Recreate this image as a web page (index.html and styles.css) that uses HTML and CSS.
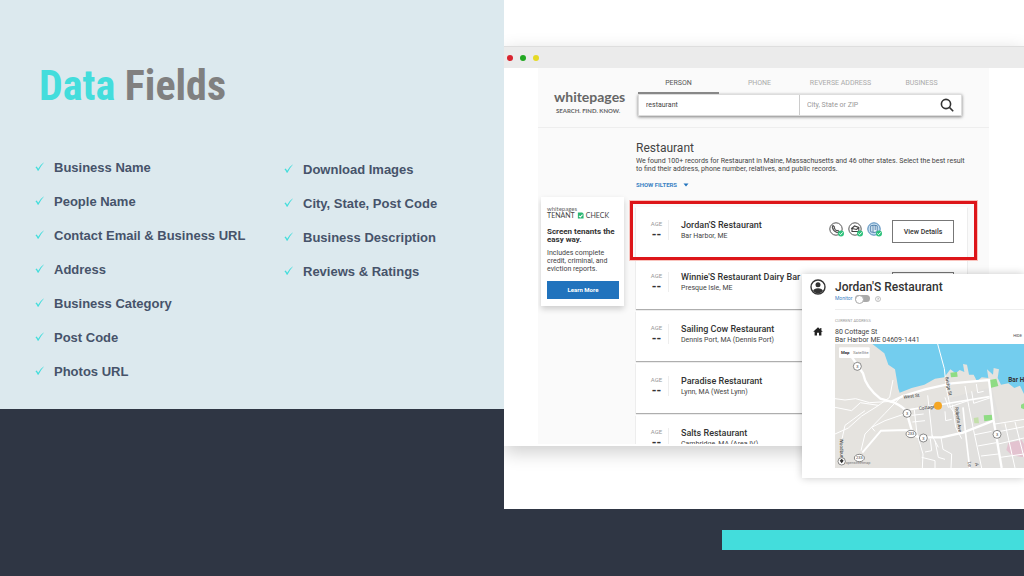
FILE: index.html
```html
<!DOCTYPE html>
<html lang="en">
<head>
    <meta charset="UTF-8">
    <meta name="viewport" content="width=device-width, initial-scale=1.0">
    <title>Data Fields</title>
    <link rel="stylesheet" href="styles.css">
</head>
<body>
    <main class="slide">
        <section class="fields">
            <h1><span>Data</span> Fields</h1>
            <div class="lists">
                <ul>
                    <li><svg class="tick" viewBox="0 0 10 10"><path d="M0.5 5.8 2 4.9 3.5 7.5Q6 3 9.6 0.6L9.8 0.9Q6.3 4.6 3.9 9.6H3Q2 7 0.5 5.8Z"/></svg>Business Name</li>
                    <li><svg class="tick" viewBox="0 0 10 10"><path d="M0.5 5.8 2 4.9 3.5 7.5Q6 3 9.6 0.6L9.8 0.9Q6.3 4.6 3.9 9.6H3Q2 7 0.5 5.8Z"/></svg>People Name</li>
                    <li><svg class="tick" viewBox="0 0 10 10"><path d="M0.5 5.8 2 4.9 3.5 7.5Q6 3 9.6 0.6L9.8 0.9Q6.3 4.6 3.9 9.6H3Q2 7 0.5 5.8Z"/></svg>Contact Email &amp; Business URL</li>
                    <li><svg class="tick" viewBox="0 0 10 10"><path d="M0.5 5.8 2 4.9 3.5 7.5Q6 3 9.6 0.6L9.8 0.9Q6.3 4.6 3.9 9.6H3Q2 7 0.5 5.8Z"/></svg>Address</li>
                    <li><svg class="tick" viewBox="0 0 10 10"><path d="M0.5 5.8 2 4.9 3.5 7.5Q6 3 9.6 0.6L9.8 0.9Q6.3 4.6 3.9 9.6H3Q2 7 0.5 5.8Z"/></svg>Business Category</li>
                    <li><svg class="tick" viewBox="0 0 10 10"><path d="M0.5 5.8 2 4.9 3.5 7.5Q6 3 9.6 0.6L9.8 0.9Q6.3 4.6 3.9 9.6H3Q2 7 0.5 5.8Z"/></svg>Post Code</li>
                    <li><svg class="tick" viewBox="0 0 10 10"><path d="M0.5 5.8 2 4.9 3.5 7.5Q6 3 9.6 0.6L9.8 0.9Q6.3 4.6 3.9 9.6H3Q2 7 0.5 5.8Z"/></svg>Photos URL</li>
                </ul>
                <ul>
                    <li><svg class="tick" viewBox="0 0 10 10"><path d="M0.5 5.8 2 4.9 3.5 7.5Q6 3 9.6 0.6L9.8 0.9Q6.3 4.6 3.9 9.6H3Q2 7 0.5 5.8Z"/></svg>Download Images</li>
                    <li><svg class="tick" viewBox="0 0 10 10"><path d="M0.5 5.8 2 4.9 3.5 7.5Q6 3 9.6 0.6L9.8 0.9Q6.3 4.6 3.9 9.6H3Q2 7 0.5 5.8Z"/></svg>City, State, Post Code</li>
                    <li><svg class="tick" viewBox="0 0 10 10"><path d="M0.5 5.8 2 4.9 3.5 7.5Q6 3 9.6 0.6L9.8 0.9Q6.3 4.6 3.9 9.6H3Q2 7 0.5 5.8Z"/></svg>Business Description</li>
                    <li><svg class="tick" viewBox="0 0 10 10"><path d="M0.5 5.8 2 4.9 3.5 7.5Q6 3 9.6 0.6L9.8 0.9Q6.3 4.6 3.9 9.6H3Q2 7 0.5 5.8Z"/></svg>Reviews &amp; Ratings</li>
                </ul>
            </div>
        </section>

        <section class="right">
            <div class="preview">
                <div class="browser">
                    <div class="titlebar">
                        <span class="dot red"></span>
                        <span class="dot green"></span>
                        <span class="dot yellow"></span>
                    </div>
                    <div class="page">
                        <header class="top">
                            <a class="logo" href="#">
                                <span class="logo-name">whitepages</span>
                                <span class="logo-tag">SEARCH. FIND. KNOW.</span>
                            </a>
                            <form class="search">
                                <nav class="tabs">
                                    <a class="active" href="#">PERSON</a>
                                    <a href="#">PHONE</a>
                                    <a href="#">REVERSE ADDRESS</a>
                                    <a href="#">BUSINESS</a>
                                </nav>
                                <div class="search-box">
                                    <input type="text" aria-label="Name" value="restaurant">
                                    <input type="text" aria-label="Location" placeholder="City, State or ZIP">
                                    <button type="button" aria-label="Search">
                                        <svg viewBox="0 0 14 14"><circle cx="6" cy="6" r="4.6"/><path d="M9.4 9.4 13.2 13.2"/></svg>
                                    </button>
                                </div>
                            </form>
                        </header>

                        <div class="content">
                            <aside class="promo">
                                <div class="promo-brand">whitepages</div>
                                <div class="promo-logo">TENANT
                                    <svg viewBox="0 0 8 8"><path fill="#2bb673" d="M1 0.5h5l1.5 1.5v5.5H1z"/><path fill="none" stroke="#fff" stroke-width="1.2" d="M2.3 4.3 3.8 5.8 6.3 2.9"/></svg>
                                    CHECK</div>
                                <h3>Screen tenants the easy way.</h3>
                                <p>Includes complete credit, criminal, and eviction reports.</p>
                                <button type="button">Learn More</button>
                            </aside>

                            <div class="results">
                                <h2>Restaurant</h2>
                                <p class="summary">We found 100+ records for Restaurant in Maine, Massachusetts and 46 other states. Select the best result to find their address, phone number, relatives, and public records.</p>
                                <a class="filters" href="#">SHOW FILTERS <svg viewBox="0 0 6 4"><path d="M0.5 0.5h5L3 3.6z"/></svg></a>

                                <article class="result selected">
                                    <div class="age">AGE<b>--</b></div>
                                    <div class="who"><h3>Jordan'S Restaurant</h3><p>Bar Harbor, ME</p></div>
                                    <div class="badges">
                                        <svg viewBox="0 0 16 16">
                                            <circle cx="7" cy="7" r="6.2" fill="#fff" stroke="#555"/>
                                            <path fill="none" stroke="#555" stroke-width="1.2" d="M4 3.5 5.5 5Q4.8 6 6.3 7.6 7.9 9.2 9 8.5L10.5 10Q9.5 11.4 7.4 10.2 3.8 8.3 3.4 5.3 3.3 4 4 3.5Z"/>
                                            <circle cx="12" cy="11.5" r="3" fill="#2fc27c"/><path fill="none" stroke="#fff" d="M10.4 11.5 11.6 12.7 13.6 10.4"/>
                                        </svg>
                                        <svg viewBox="0 0 16 16">
                                            <circle cx="7" cy="7" r="6.2" fill="#fff" stroke="#555"/>
                                            <path fill="none" stroke="#444" stroke-width="1.1" d="M3.2 7 6.5 4 10.8 5.5V9.5H4V6.5L8.5 7.5 10.8 5.5"/>
                                            <circle cx="12" cy="11.5" r="3" fill="#2fc27c"/><path fill="none" stroke="#fff" d="M10.4 11.5 11.6 12.7 13.6 10.4"/>
                                        </svg>
                                        <svg viewBox="0 0 16 16">
                                            <circle cx="7" cy="7" r="6.2" fill="#c6def0" stroke="#4d87b8"/>
                                            <path fill="#e4f0f8" stroke="#386f9e" stroke-width=".8" d="M3.7 3.8 7 3.2 10.2 3.8V9.8L7 10.5 3.7 9.8ZM6 3.5V10M8.2 3.5V8"/>
                                            <circle cx="12" cy="11.5" r="3" fill="#2fc27c"/><path fill="none" stroke="#fff" d="M10.4 11.5 11.6 12.7 13.6 10.4"/>
                                        </svg>
                                    </div>
                                    <button type="button">View Details</button>
                                </article>
                                <article class="result">
                                    <div class="age">AGE<b>--</b></div>
                                    <div class="who"><h3>Winnie'S Restaurant Dairy Bar</h3><p>Presque Isle, ME</p></div>
                                    <button type="button" aria-label="View Details"></button>
                                </article>
                                <article class="result">
                                    <div class="age">AGE<b>--</b></div>
                                    <div class="who"><h3>Sailing Cow Restaurant</h3><p>Dennis Port, MA (Dennis Port)</p></div>
                                </article>
                                <article class="result">
                                    <div class="age">AGE<b>--</b></div>
                                    <div class="who"><h3>Paradise Restaurant</h3><p>Lynn, MA (West Lynn)</p></div>
                                </article>
                                <article class="result">
                                    <div class="age">AGE<b>--</b></div>
                                    <div class="who"><h3>Salts Restaurant</h3><p>Cambridge, MA (Area IV)</p></div>
                                </article>
                            </div>
                        </div>
                    </div>
                </div>

                <div class="detail">
                    <div class="detail-head">
                        <svg class="avatar" viewBox="0 0 16 16"><circle cx="8" cy="8" r="7" fill="#fff" stroke="#333" stroke-width="1.4"/><circle cx="8" cy="5.8" r="2.5" fill="#333"/><path fill="#333" d="M3 12Q4 9.2 8 9.2T13 12Q11 14.4 8 14.4T3 12Z"/></svg>
                        <div>
                            <h2>Jordan'S Restaurant</h2>
                            <label class="monitor">Monitor <input type="checkbox"><svg class="help" viewBox="0 0 6 6"><circle cx="3" cy="3" r="2.5"/><path d="M2.2 2.4Q3 1.4 3.7 2.3 3.6 2.9 3 3.2V4.5"/></svg></label>
                        </div>
                    </div>
                    <div class="detail-body">
                        <svg class="home" viewBox="0 0 10 9"><path d="M5 0.3 0.2 4.8H1.6V8.6H4V5.8H6V8.6H8.4V4.8H9.8L8.4 3.4V1H7.2V2.3Z"/></svg>
                        <div class="place">
                            <div class="caption">CURRENT ADDRESS</div>
                            <div class="address">
                                <p>80 Cottage St<br>Bar Harbor ME 04609-1441</p>
                                <a href="#">HIDE</a>
                            </div>
                            <svg class="map" viewBox="0 0 567 372" preserveAspectRatio="xMinYMin slice">
                                <rect width="700" height="372" fill="#e5e3df"/>
                                <path fill="#dedede" d="M238 190 470 130 500 250 567 260V372H260Z" opacity=".5"/>
                                <path fill="#73cdee" d="M112 0H700V160L567 150 555 125 538 132 520 118 498 122 488 102 492 76 476 72 474 92 456 76 460 102 440 100 426 112 416 92 402 92 396 62 384 60 388 84 374 78 362 88 346 76 328 100 300 104 268 122 230 132 194 146 190 134 180 76 160 62 148 28Z"/>
                                <path fill="#8fdc84" d="M346 86 366 84 368 98 348 100ZM464 108 484 104 490 126 466 132ZM446 214 474 212 474 228 448 232ZM558 182 567 178V196L558 192Z"/>
                                <path fill="#c3dfaa" d="M416 222 430 220 432 238 418 238Z"/>
                                <path fill="#e3c3d0" d="M520 296 560 288 567 300V340L530 334 514 318Z"/>
                                <g fill="none" stroke="#fff" stroke-width="3">
                                    <path d="M0 164 30 168 62 164 104 176 170 172M0 270 40 252 80 216 128 186 164 160 174 108M20 290 30 244 90 200M78 320 90 270 150 208 204 152M0 190 50 200 76 176 130 184M120 262 110 250 150 230 220 206"/>
                                    <path d="M308 0 328 74 334 132 346 190 360 210M278 154 292 280M290 272 310 310M330 160 340 190 400 170M352 182 362 250 380 284M390 126 402 190 416 260 440 372M410 142 416 178 470 160M424 120 428 146 446 142M330 202 332 230 350 226"/>
                                    <path d="M238 198 246 270 264 330 262 372M286 284 290 320 270 324M300 290 310 340 330 346M318 280 324 316 350 330 348 372M420 272 470 262M428 306 484 296M438 336 490 330M480 240 567 226M486 264 567 248M490 300 567 282M496 340 567 330M510 238 540 372M540 234 567 340M260 340 300 350 300 372M230 214 266 210M232 234 270 230"/>
                                    <path stroke-width="5" d="M206 200 290 186 464 158M384 190 392 270 404 372"/>
                                </g>
                                <g fill="none" stroke="#fff" stroke-width="7">
                                    <path d="M40 24 84 88Q92 130 136 164L178 176Q206 190 214 202L232 266Q240 280 260 280L320 280 384 266 476 230"/>
                                    <path d="M166 174 204 156 270 136 350 118 462 108 476 230 500 372"/>
                                    <path stroke-width="6" d="M230 262 214 258 138 260 82 326"/>
                                </g>
                                <g class="street">
                                    <text transform="translate(206 164) rotate(-7)">West St</text>
                                    <text transform="translate(252 198) rotate(-7)">Cottage</text>
                                    <text transform="translate(330 100) rotate(78)">Bridge St</text>
                                    <text transform="translate(360 190) rotate(82)">Roberts Ave</text>
                                    <text transform="translate(14 284) rotate(88)">Woodbury</text>
                                    <text transform="translate(398 354) rotate(80)">Le</text>
                                    <text transform="translate(420 358) rotate(80)">A</text>
                                </g>
                                <g class="shield">
                                    <circle cx="67" cy="67" r="12"/><circle cx="216" cy="208" r="12"/><circle cx="265" cy="282" r="12"/><circle cx="486" cy="271" r="12"/><circle cx="20" cy="352" r="11"/>
                                    <ellipse cx="228" cy="270" rx="15" ry="11"/><ellipse cx="73" cy="342" rx="15" ry="11"/>
                                    <text x="67" y="72">3</text><text x="216" y="213">3</text><text x="265" y="287">3</text><text x="486" y="276">3</text><text x="228" y="274">233</text><text x="73" y="346">233</text>
                                </g>
                                <path fill="#333" d="M14 350 20 344 26 350 20 358Z"/>
                                <text class="credit" x="32" y="360">openstreetmap</text>
                                <circle cx="309" cy="185" r="12" fill="#f5a623"/>
                                <text class="town" x="520" y="114">Bar Harbor</text>
                                <rect x="12" y="10" width="92" height="32" rx="3" fill="#fff"/>
                                <text class="kind" x="18" y="31">Map</text><text class="kind light" x="54" y="31">Satellite</text>
                            </svg>
                        </div>
                    </div>
                </div>
            </div>
            <div class="accent"></div>
        </section>
    </main>
</body>
</html>
```
FILE: styles.css
```css
* {
    box-sizing: border-box;
}

body {
    background-color: #2f3644;
    font-family: Roboto, Arial, sans-serif;
    margin: 0;
}

h1, h2, h3, p, ul {
    margin: 0;
    padding: 0;
}

a {
    color: inherit;
    text-decoration: none;
}

input, button {
    font-family: inherit;
    margin: 0;
    padding: 0;
    border: 0;
}

button {
    cursor: pointer;
}

.slide {
    display: grid;
    grid-template-columns: 504fr 520fr;
    align-items: start;
    min-height: 100vh;
    overflow: hidden;
}

/* left side */
.fields {
    background-color: #dce9ee;
    padding: 56px 32px 30px 35px;
}

h1 {
    color: #808080;
    font-family: "Agency FB", "Roboto Condensed", "Open Sans Condensed", "Noto Sans ExtraCondensed", "Noto Sans Condensed", "Liberation Sans Narrow", "Liberation Sans", sans-serif;
    font-size: 42px;
    line-height: 60px;
    padding-left: 4px;
}

h1 span {
    color: #43dddc;
}

.lists {
    display: grid;
    grid-template-columns: 249fr 188fr;
    margin-top: 45px;
}

.lists ul {
    display: flex;
    flex-direction: column;
    gap: 20px;
    list-style: none;
}

.lists ul + ul {
    padding-top: 2px;
}

.lists li {
    display: flex;
    gap: 10px;
    color: #46536a;
    font-family: "Liberation Sans", Arial, sans-serif;
    font-size: 13px;
    font-weight: bold;
    line-height: 14px;
    white-space: nowrap;
}

.tick {
    width: 9px;
    height: 9px;
    margin-top: 1px;
    fill: #43dddc;
}

/* right side */
.right {
    min-width: 0;
}

.preview {
    position: relative;
    background-color: #fff;
    padding: 46px 0 63px;
    overflow: hidden;
}

.browser {
    background-color: #fff;
    box-shadow: 0 6px 18px rgba(0, 0, 0, 0.2);
}

.titlebar {
    display: flex;
    align-items: center;
    gap: 7px;
    padding: 0 3px;
    height: 22px;
    background-color: #ebebeb;
    border-top: 1px solid #dedede;
}

.dot {
    width: 6px;
    height: 6px;
    border-radius: 50%;
}

.red {
    background-color: #d9232e;
}

.green {
    background-color: #22a822;
}

.yellow {
    background-color: #e5d925;
}

.page {
    max-height: 378px;
    margin: 0 35px 0 34px;
    background-color: #fafafa;
    border-bottom: 2px solid #fff;
    overflow: hidden;
}

.top {
    display: grid;
    grid-template-columns: 84px 1fr;
    padding: 0 27px 11px 16px;
    border-bottom: 1px solid #eee;
}

.logo {
    display: flex;
    flex-direction: column;
    padding-top: 19px;
    color: #666;
    font-family: Lato, sans-serif;
    font-weight: bold;
}

.logo-name {
    font-size: 14px;
    line-height: 20px;
}

.logo-tag {
    padding-left: 2px;
    font-size: 6px;
    line-height: 8px;
}

.tabs {
    display: grid;
    grid-template-columns: repeat(4, 1fr);
    color: #aaa;
    font-size: 7px;
    line-height: 8px;
    text-align: center;
}

.tabs a {
    padding: 11px 0 5px;
    border-bottom: 2px solid transparent;
}

.tabs .active {
    color: #555;
    border-bottom-color: #888;
}

.search-box {
    display: flex;
    height: 22px;
    background-color: #fff;
    border: 1px solid #ddd;
    box-shadow: 0 1px 3px rgba(0, 0, 0, 0.5);
}

.search-box input {
    width: 50%;
    min-width: 0;
    padding: 0 7px;
    background-color: transparent;
    border-right: 1px solid #ccc;
    color: #444;
    font-size: 7px;
    outline: 0;
}

.search-box input + input {
    width: auto;
    flex: 1;
    border-right: 0;
}

.search-box input::placeholder {
    color: #999;
}

.search-box button {
    display: grid;
    place-items: center;
    width: 28px;
    background-color: transparent;
}

.search-box svg {
    width: 14px;
    height: 14px;
    fill: none;
    stroke: #333;
    stroke-width: 1.6;
}

.content {
    display: grid;
    grid-template-columns: 83px 1fr;
    gap: 12px;
    align-items: start;
    padding: 0 22px 0 3px;
}

.promo {
    margin-top: 69px;
    padding: 9px 5px 7px 6px;
    background-color: #fff;
    box-shadow: 0 3px 6px rgba(0, 0, 0, 0.18);
    color: #444;
}

.promo-brand {
    color: #666;
    font-family: Lato, sans-serif;
    font-size: 6px;
    line-height: 5px;
}

.promo-logo {
    display: flex;
    align-items: center;
    gap: 2px;
    font-family: Lato, sans-serif;
    font-size: 7px;
    line-height: 8px;
}

.promo-logo svg {
    width: 7px;
    height: 7px;
}

.promo h3 {
    padding-top: 9px;
    color: #333;
    font-size: 8px;
    font-weight: bold;
    line-height: 8px;
}

.promo p {
    padding: 5px 10px 4px 0;
    font-size: 7px;
    line-height: 8px;
}

.promo button {
    width: 100%;
    height: 18px;
    background-color: #2173bd;
    color: #fff;
    font-size: 6px;
    font-weight: bold;
}

.results {
    display: flex;
    flex-direction: column;
    gap: 2px;
    padding-top: 13px;
    color: #444;
}

.results h2 {
    font-size: 12px;
    font-weight: normal;
    line-height: 14px;
}

.summary {
    font-size: 7px;
    line-height: 8px;
}

.filters {
    padding: 6px 0 16px;
    color: #3b82c4;
    font-size: 6px;
    font-weight: bold;
    line-height: 8px;
}

.filters svg {
    width: 6px;
    height: 4px;
    margin-left: 4px;
    fill: #2173bd;
}

.result {
    position: relative;
    display: flex;
    align-items: flex-start;
    height: 50px;
    padding: 13px 13px 0;
    background-color: #fff;
    box-shadow: 0 1px 1px rgba(0, 0, 0, 0.3);
}

/* red frame round the chosen record */
.selected::after {
    content: "";
    position: absolute;
    inset: -6px -10px -3px -6px;
    border: 3px solid #dd1519;
    outline: 1px solid #f9c3bd;
    z-index: 1;
}

.age {
    width: 20px;
    height: 20px;
    border-right: 1px solid #eee;
    color: #999;
    font-size: 6px;
    line-height: 8px;
    text-align: center;
    padding-right: 4px;
}

.age b {
    display: block;
    color: #333;
    font-size: 12px;
    line-height: 14px;
}

.who {
    flex: 1;
    padding-left: 12px;
    white-space: nowrap;
}

.who h3 {
    color: #333;
    font-size: 9px;
    font-weight: 500;
    line-height: 11px;
}

.who p {
    font-size: 7px;
    line-height: 10px;
}

.badges {
    display: flex;
    gap: 3px;
    padding: 2px 9px 0 0;
}

.badges svg {
    width: 16px;
    height: 16px;
}

.result button {
    width: 62px;
    height: 23px;
    background-color: #fff;
    border: 1px solid #777;
    color: #333;
    font-size: 7px;
    font-weight: 500;
}

/* record panel over the browser window */
.detail {
    position: absolute;
    top: 274px;
    left: 298px;
    right: 0;
    padding: 5px 0 10px 8px;
    background-color: #fff;
    box-shadow: 0 0 8px rgba(0, 0, 0, 0.22);
    color: #444;
}

.detail-head {
    display: flex;
    gap: 9px;
}

.avatar {
    width: 16px;
    height: 16px;
}

.detail-head div {
    flex: 1;
    padding-bottom: 7px;
    border-bottom: 1px solid #eee;
}

.detail-head h2 {
    color: #333;
    font-size: 12px;
    font-weight: 500;
    line-height: 16px;
}

.monitor {
    display: flex;
    align-items: center;
    gap: 3px;
    color: #3b82c4;
    font-size: 5px;
    line-height: 7px;
}

.monitor input {
    appearance: none;
    width: 15px;
    height: 7px;
    background-color: #aaa;
    border-radius: 4px;
}

.monitor input::before {
    content: "";
    display: block;
    width: 7px;
    height: 7px;
    background-color: #fff;
    border: 1px solid #aaa;
    border-radius: 50%;
}

.help {
    width: 6px;
    height: 6px;
    margin-left: 2px;
    fill: none;
    stroke: #999;
    stroke-width: 0.6;
}

.detail-body {
    display: flex;
    gap: 12px;
    padding: 8px 0 0 3px;
}

.home {
    width: 10px;
    height: 9px;
    margin-top: 9px;
    fill: #222;
}

.place {
    flex: 1;
    min-width: 0;
}

.caption {
    color: #999;
    font-size: 4px;
    line-height: 6px;
}

.address {
    display: flex;
    justify-content: space-between;
    align-items: center;
    padding: 4px 0 0;
    font-size: 7px;
    line-height: 8px;
}

.address a {
    padding-right: 2px;
    font-size: 4px;
}

.map {
    display: block;
    width: 100%;
    height: 124px;
}

.map text {
    fill: #333;
    font-size: 15px;
}

.map .street text {
    font-size: 14px;
}

.map .shield circle, .map .shield ellipse {
    fill: #fff;
    stroke: #555;
    stroke-width: 2;
}

.map .shield text {
    font-size: 12px;
    text-anchor: middle;
}

.map .credit {
    fill: #777;
    font-size: 11px;
}

.map .town {
    font-size: 19px;
    font-weight: bold;
}

.map .kind {
    font-size: 13px;
    font-weight: bold;
}

.map .light {
    fill: #777;
    font-weight: normal;
}

.accent {
    height: 20px;
    margin: 21px 0 0 42%;
    background-color: #43dddc;
}
```
